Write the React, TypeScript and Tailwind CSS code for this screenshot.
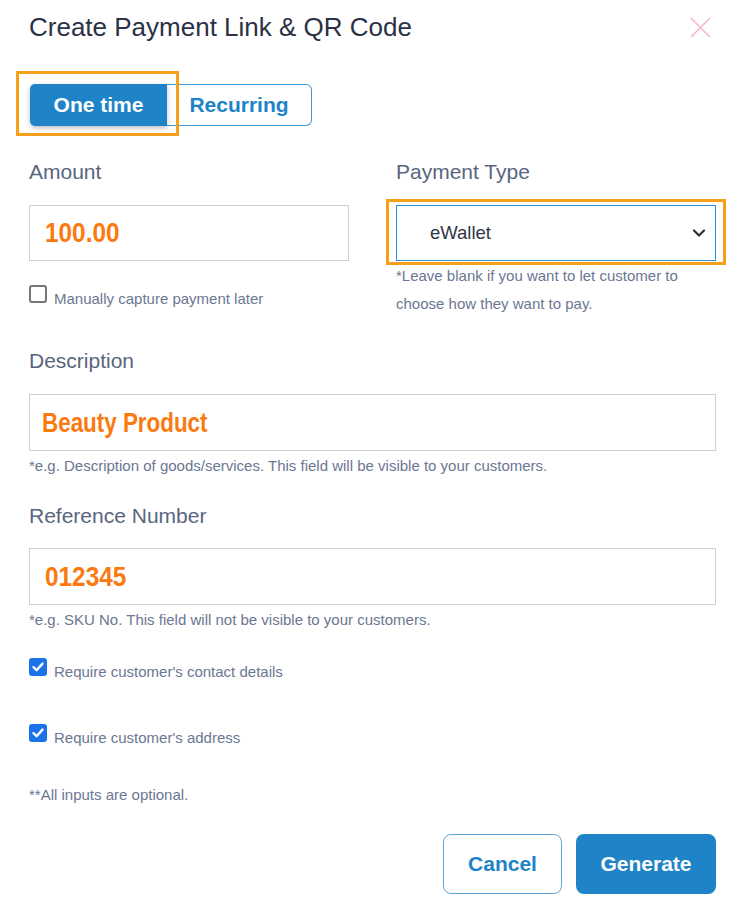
import React from "react";

function Box({ checked }: { checked: boolean }) {
  if (checked) {
    return (
      <div className="w-[18px] h-[18px] rounded-[3px] bg-[#1a73e8] flex items-center justify-center shrink-0">
        <svg width="14" height="14" viewBox="0 0 14 14">
          <path d="M2.5 7.2 L5.6 10.2 L11.5 3.6" fill="none" stroke="#fff" strokeWidth="2.4" strokeLinecap="round" strokeLinejoin="round" />
        </svg>
      </div>
    );
  }
  return <div className="w-[18px] h-[18px] rounded-[3px] border-2 border-[#767676] bg-white shrink-0" />;
}

function CheckRow({ checked, label }: { checked: boolean; label: string }) {
  return (
    <div className="flex items-start h-[22px]">
      <Box checked={checked} />
      <span className="ml-[7px] mt-[5px] text-[15px] leading-[17px] text-[#6b7793] whitespace-nowrap">{label}</span>
    </div>
  );
}

const orangeText = "inline-block origin-left scale-x-[0.8] font-bold text-[28px] text-[#fb7a10] leading-none";
const orangeNum = "inline-block origin-left scale-x-[0.87] font-bold text-[28px] text-[#fb7a10] leading-none";

export default function App() {
  return (
    <div className="w-[738px] h-[910px] bg-white [font-family:'Liberation_Sans',Arial,sans-serif]">
      <div className="pl-[29px] pr-[22px]">
        <div className="flex items-center justify-between h-[54px]">
          <h1 className="text-[26px] leading-none text-[#2b3245]">Create Payment Link &amp; QR Code</h1>
          <svg width="22" height="22" viewBox="0 0 22 22" className="mr-[5px] mt-[2px]">
            <path d="M2 1 L21 20 M21 1 L2 20" stroke="#f7b6c6" strokeWidth="1.6" fill="none" />
          </svg>
        </div>

        <div className="relative mt-[30px] flex w-[282px] h-[42px] ml-[1px]">
          <div className="w-[137px] h-[42px] bg-[#1e83c7] rounded-l-[5px] shadow-[0_2px_5px_rgba(0,0,0,0.25)] flex items-center justify-center text-white font-bold text-[21px]">
            One time
          </div>
          <div className="w-[145px] h-[42px] border border-l-0 border-[#3b97d5] rounded-r-[6px] flex items-center justify-center text-[#1e83c7] font-bold text-[21px]">
            Recurring
          </div>
          <div className="absolute left-[-14px] top-[-13px] w-[163px] h-[65px] border-[3px] border-[#f6a01a]" />
        </div>

        <div className="mt-[34px] grid grid-cols-[320px_320px] gap-x-[47px]">
          <div>
            <div className="h-[24px] leading-[24px] text-[21px] text-[#59657e]">Amount</div>
            <div className="mt-[21px] h-[56px] border border-[#cfcfcf] flex items-center pl-[15px]">
              <span className={orangeNum}>100.00</span>
            </div>
            <div className="mt-[24px]">
              <CheckRow checked={false} label="Manually capture payment later" />
            </div>
          </div>
          <div>
            <div className="h-[24px] leading-[24px] text-[21px] text-[#59657e]">Payment Type</div>
            <div className="relative mt-[21px] h-[56px] border border-[#2d8fd5] flex items-center justify-between pl-[33px] pr-[9px]">
              <span className="text-[18.5px] text-[#2f3646]">eWallet</span>
              <svg width="14" height="10" viewBox="0 0 14 10">
                <path d="M2 2.5 L7 7.5 L12 2.5" fill="none" stroke="#2a2f3a" strokeWidth="2.2" strokeLinecap="round" strokeLinejoin="round" />
              </svg>
              <div className="absolute left-[-11px] top-[-7px] right-[-11px] bottom-[-5px] border-[3px] border-[#f6a01a]" />
            </div>
            <div className="mt-[1px] text-[15px] leading-[28px] text-[#6b7793] whitespace-nowrap">
              *Leave blank if you want to let customer to
              <br />
              choose how they want to pay.
            </div>
          </div>
        </div>

        <div className="mt-[31px] h-[24px] leading-[24px] text-[21px] text-[#59657e]">Description</div>
        <div className="mt-[21px] h-[57px] border border-[#cfcfcf] flex items-center pl-[12px]">
          <span className={orangeText}>Beauty Product</span>
        </div>
        <div className="mt-[5px] text-[15px] leading-[20px] text-[#6b7793]">
          *e.g. Description of goods/services. This field will be visible to your customers.
        </div>

        <div className="mt-[28px] h-[24px] leading-[24px] text-[21px] text-[#59657e]">Reference Number</div>
        <div className="mt-[20px] h-[57px] border border-[#cfcfcf] flex items-center pl-[15px]">
          <span className={orangeNum}>012345</span>
        </div>
        <div className="mt-[5px] text-[15px] leading-[20px] text-[#6b7793]">
          *e.g. SKU No. This field will not be visible to your customers.
        </div>

        <div className="mt-[28px]">
          <CheckRow checked={true} label="Require customer's contact details" />
        </div>
        <div className="mt-[44px]">
          <CheckRow checked={true} label="Require customer's address" />
        </div>

        <div className="mt-[40px] text-[15px] leading-[17px] text-[#6b7793]">**All inputs are optional.</div>

        <div className="mt-[31px] flex justify-end gap-[14px]">
          <button className="w-[119px] h-[60px] rounded-[8px] border border-[#5aa6dc] bg-white text-[#1e83c7] font-bold text-[21px]">
            Cancel
          </button>
          <button className="w-[140px] h-[60px] rounded-[8px] bg-[#1e83c7] text-white font-bold text-[21px]">
            Generate
          </button>
        </div>
      </div>
    </div>
  );
}
